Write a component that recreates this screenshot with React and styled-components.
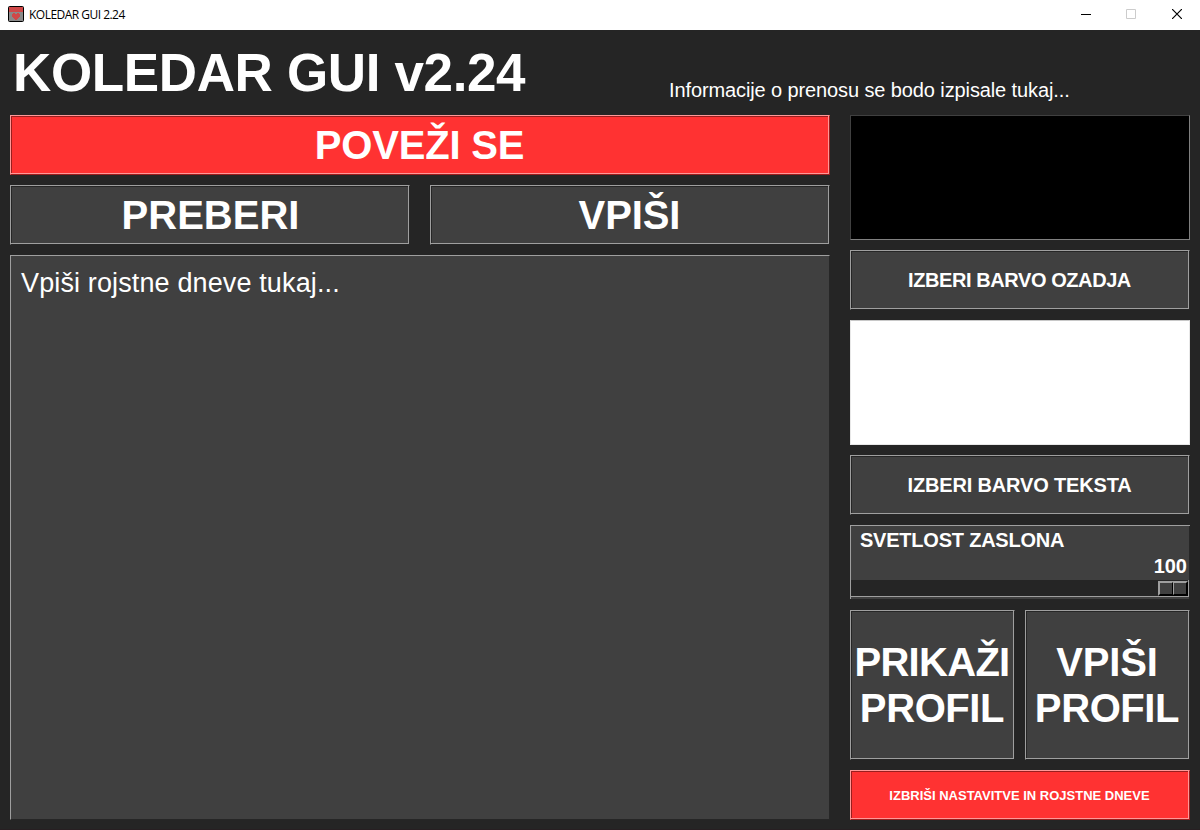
import React from "react";
import styled, { createGlobalStyle } from "styled-components";

const GlobalStyle = createGlobalStyle`
  * { box-sizing: border-box; }
  body { margin: 0; background: #252525; overflow: hidden; }
`;

const Window = styled.div`
  width: 1200px;
  height: 830px;
  display: flex;
  flex-direction: column;
  background: #252525;
  border-bottom: 1px solid #271f22;
  color: #fff;
  font-family: "Liberation Sans", Arial, sans-serif;
`;

const TitleBar = styled.header`
  flex: none;
  height: 30px;
  display: flex;
  align-items: center;
  padding-left: 8px;
  background: #fff;
  color: #000;
`;

const AppIcon = styled.svg`
  display: block;
  width: 16px;
  height: 16px;
  margin: -2px 5px 0 0;
`;

const Caption = styled.span`
  flex: 1;
  font: 12px/16px "Open Sans", "Noto Sans", sans-serif;
  letter-spacing: -0.52px;
  white-space: nowrap;
`;

const WindowButton = styled.button`
  width: 46px;
  height: 30px;
  padding: 0;
  border: 0;
  background: none;
  color: ${(p) => (p.$disabled ? "#ccc" : "#000")};
  svg { display: block; margin: -2px auto 0; }
`;

const Header = styled.div`
  flex: none;
  height: 85px;
  display: grid;
  grid-template-columns: 659px 1fr;
  padding-left: 10px;
`;

const Title = styled.h1`
  margin: 0;
  padding: 12px 0 0 3px;
  font-size: 53px;
  line-height: 61px;
  font-weight: bold;
  letter-spacing: -0.36px;
  white-space: nowrap;
`;

const Status = styled.p`
  margin: 0;
  padding-top: 48px;
  font-size: 20px;
  line-height: 24px;
  letter-spacing: -0.11px;
  white-space: nowrap;
`;

const Body = styled.main`
  display: grid;
  grid-template-columns: 820px 340px;
  column-gap: 20px;
  padding: 0 10px;
  height: 705px;
`;

const Column = styled.section`
  display: flex;
  flex-direction: column;
  gap: 10px;
`;

const Pair = styled.div`
  flex: none;
  display: grid;
  grid-template-columns: 1fr 1fr;
  gap: ${(p) => p.$gap}px;
`;

const RidgeButton = styled.button`
  flex: none;
  display: flex;
  align-items: center;
  justify-content: center;
  width: 100%;
  height: ${(p) => p.$height}px;
  padding: 0 ${(p) => (p.$nudge ? 0 : 1)}px 0 ${(p) => p.$nudge || 0}px;
  border: 1px solid;
  border-color: ${(p) =>
    p.$danger ? "#ff9898 #991e1e #991e1e #ff9898" : "#9f9f9f #262626 #262626 #9f9f9f"};
  box-shadow: ${(p) =>
    p.$danger
      ? "inset -1px -1px #ff9898, inset 1px 1px #991e1e"
      : "inset -1px -1px #9f9f9f, inset 1px 1px #262626"};
  background: ${(p) => (p.$danger ? "#ff3232" : "#404040")};
  color: #fff;
  font-family: inherit;
  font-weight: bold;
  font-size: ${(p) => p.$size}px;
  line-height: ${(p) => p.$line || p.$size}px;
  letter-spacing: ${(p) => p.$track || 0}px;
  text-align: center;
  white-space: pre;
`;

const Line = styled.span`
  display: block;
  letter-spacing: ${(p) => p.$track}px;
`;

const Notes = styled.textarea`
  flex: 1;
  display: block;
  resize: none;
  outline: none;
  padding: 12px 10px 10px;
  border: 1px solid;
  border-color: #9f9f9f #262626 #262626 #9f9f9f;
  background: #404040;
  color: #fff;
  font: 27px/31px "Liberation Sans", Arial, sans-serif;
  letter-spacing: 0.13px;
`;

const Swatch = styled.div`
  flex: none;
  height: 125px;
  background: ${(p) => p.$color};
  border: 1px solid;
  border-color: ${(p) => p.$edges};
`;

const Scale = styled.div`
  flex: none;
  height: 74px;
  margin-bottom: 1px;
  padding-right: 1px;
  border-top: 1px solid #9f9f9f;
  border-left: 1px solid #9f9f9f;
  background: linear-gradient(to left, #262626 1px, #404040 1px);
  font-weight: bold;
  font-size: 20px;
`;

const ScaleLabel = styled.div`
  padding: 2px 0 0 9px;
  height: 27px;
  line-height: 24px;
  letter-spacing: -0.22px;
`;

const ScaleValue = styled.div`
  height: 27px;
  padding: 1px 2px 0 0;
  line-height: 24px;
  text-align: right;
`;

const Trough = styled.div`
  height: 17px;
  display: flex;
  justify-content: flex-end;
  align-items: flex-start;
  padding-top: 1px;
  background: #252525;
  border-bottom: 1px solid #9f9f9f;
  border-right: 1px solid #9f9f9f;
`;

const Thumb = styled.div`
  display: flex;
  width: 30px;
  height: 15px;
  border: 1px solid;
  border-color: #9f9f9f #000 #000 #9f9f9f;
`;

const ThumbHalf = styled.i`
  flex: 1;
  border: 1px solid;
  border-color: #9f9f9f #000 #000 #9f9f9f;
  background: #404040;
`;

export default function App() {
  return (
    <Window>
      <GlobalStyle />
      <TitleBar>
        <AppIcon viewBox="0 0 16 16">
          <rect x=".5" y=".5" width="15" height="15" rx="1" fill="#8a8a8a" stroke="#000" />
          <path d="M1 1h14v5H1z" fill="#d04848" />
          <path
            d="M5 7h2v1h2V7h2v1h1v3h-1v1h-1v1H9v1H7v-1H6v-1H5v-1H4V8h1z"
            fill="#d04848"
            shapeRendering="crispEdges"
          />
        </AppIcon>
        <Caption>KOLEDAR GUI 2.24</Caption>
        <WindowButton aria-label="Minimize">
          <svg width="10" height="10" overflow="visible"><path d="M1 5.5h10" stroke="currentColor" /></svg>
        </WindowButton>
        <WindowButton aria-label="Maximize" $disabled>
          <svg width="10" height="10"><path d="M.5.5h9v9h-9z" fill="none" stroke="currentColor" /></svg>
        </WindowButton>
        <WindowButton aria-label="Close">
          <svg width="10" height="10"><path d="M0 0l10 10M10 0L0 10" stroke="currentColor" strokeWidth="1.2" /></svg>
        </WindowButton>
      </TitleBar>
      <Header>
        <Title>KOLEDAR GUI v2.24</Title>
        <Status>Informacije o prenosu se bodo izpisale tukaj...</Status>
      </Header>
      <Body>
        <Column>
          <RidgeButton $danger $height={60} $size={40} $track={-0.2}>POVEŽI SE</RidgeButton>
          <Pair $gap={20}>
            <RidgeButton $height={60} $size={40} $nudge={1}>PREBERI</RidgeButton>
            <RidgeButton $height={60} $size={40} $track={-0.1}>VPIŠI</RidgeButton>
          </Pair>
          <Notes defaultValue="Vpiši rojstne dneve tukaj..." spellCheck={false} />
        </Column>
        <Column>
          <Swatch $color="#000" $edges="#404040 #808080 #808080 #404040" />
          <RidgeButton $height={60} $size={20} $track={-0.42}>IZBERI BARVO OZADJA</RidgeButton>
          <Swatch $color="#fff" $edges="#c8c8c8 #e8e8e8 #e8e8e8 #e8e8e8" />
          <RidgeButton $height={60} $size={20} $track={-0.16}>IZBERI BARVO TEKSTA</RidgeButton>
          <Scale>
            <ScaleLabel>SVETLOST ZASLONA</ScaleLabel>
            <ScaleValue>100</ScaleValue>
            <Trough>
              <Thumb>
                <ThumbHalf />
                <ThumbHalf />
              </Thumb>
            </Trough>
          </Scale>
          <Pair $gap={10}>
            <RidgeButton $height={150} $size={40} $line={46}>
              <span>
                <Line $track={-0.7}>PRIKAŽI</Line>
                <Line $track={-0.4}>PROFIL</Line>
              </span>
            </RidgeButton>
            <RidgeButton $height={150} $size={40} $line={46}>
              <span>
                <Line $track={-0.2}>VPIŠI</Line>
                <Line $track={-0.4}>PROFIL</Line>
              </span>
            </RidgeButton>
          </Pair>
          <RidgeButton $danger $height={50} $size={13}>IZBRIŠI NASTAVITVE IN ROJSTNE DNEVE</RidgeButton>
        </Column>
      </Body>
    </Window>
  );
}
